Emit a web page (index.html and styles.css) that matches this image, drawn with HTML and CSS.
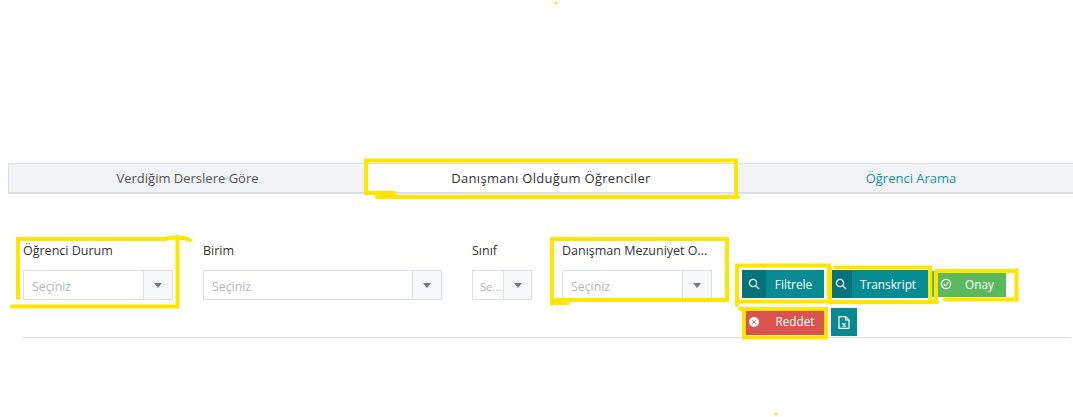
FILE: index.html
```html
<!DOCTYPE html>
<html lang="en">
<head>
    <meta charset="UTF-8" />
    <title>Danışmanı Olduğum Öğrenciler</title>
    <link rel="stylesheet" href="styles.css">
</head>
<body>
<div class="tabs">
    <div class="tab">Verdiğim Derslere Göre</div>
    <div class="tab active">Danışmanı Olduğum Öğrenciler</div>
    <div class="tab link">Öğrenci Arama</div>
</div>

<div class="filters">
    <div class="field">
        <label>Öğrenci Durum</label>
        <div class="select"><span class="value">Seçiniz</span><span class="arrow"></span></div>
    </div>
    <div class="field">
        <label>Birim</label>
        <div class="select"><span class="value">Seçiniz</span><span class="arrow"></span></div>
    </div>
    <div class="field narrow">
        <label>Sınıf</label>
        <div class="select"><span class="value">Seçiniz</span><span class="arrow"></span></div>
    </div>
    <div class="field">
        <label>Danışman Mezuniyet Onayı</label>
        <div class="select"><span class="value">Seçiniz</span><span class="arrow"></span></div>
    </div>
    <div class="actions">
        <button class="btn teal filtrele">
            <span class="btn-icon">
                <svg width="12" height="12" viewBox="0 0 12 12"><circle cx="5" cy="5" r="3.6" /><path d="M7.7 7.7L11 11" /></svg>
            </span>
            <span class="btn-text">Filtrele</span>
        </button>
        <button class="btn teal transkript">
            <span class="btn-icon">
                <svg width="12" height="12" viewBox="0 0 12 12"><circle cx="5" cy="5" r="3.6" /><path d="M7.7 7.7L11 11" /></svg>
            </span>
            <span class="btn-text">Transkript</span>
        </button>
        <button class="btn green onay">
            <span class="btn-icon">
                <svg width="12" height="12" viewBox="0 0 12 12"><circle cx="6" cy="6" r="4.6" /><path d="M3.8 6.2L5.4 7.7L8.4 4.4" /></svg>
            </span>
            <span class="btn-text">Onay</span>
        </button>
        <button class="btn red reddet">
            <span class="btn-icon">
                <svg width="12" height="12" viewBox="0 0 12 12"><circle class="solid" cx="6" cy="6" r="5" /><path class="cross" d="M4.3 4.3L7.7 7.7M7.7 4.3L4.3 7.7" /></svg>
            </span>
            <span class="btn-text">Reddet</span>
        </button>
        <button class="btn teal excel">
            <svg width="12" height="13" viewBox="0 0 12 13"><path d="M1 .6H7.600L11 4V12.400H1Z" /><path d="M7.600 .6V4H11" /><text x="6" y="10.500">x</text></svg>
        </button>
    </div>
</div>
<div class="rule"></div>

<!-- yellow marker scribbles drawn on top of the screenshot -->
<svg class="marks" width="1073" height="417" viewBox="0 0 1073 417">
    <path d="M366 160.500H736V196" />
    <path d="M366 160.500V193H395" />
    <path d="M377 197H738" />
    <path d="M18 298V239H165C172 237 180 236 190 240" />
    <path d="M177.500 237V306.500H12" />
    <path d="M552 304V239H727V300H552" />
    <path d="M552 303H568" />
    <path d="M737 305V265.500H829V298" />
    <path d="M740 301.500H830" />
    <path d="M830 268V300" />
    <path d="M835 267.500H930V301" />
    <path d="M830 302H937" />
    <path d="M937 271H1014" />
    <path d="M936 271V299" />
    <path d="M1016.500 270V299.500H945" />
    <path d="M740 309H826V337.500H744V309" />
    <circle cx="556" cy="3" r="1.500" />
    <circle cx="776" cy="414" r="1.500" />
</svg>
</body>
</html>
```

FILE: styles.css
```css
html, body {
    height: 417px;
    overflow: hidden;
}
body {
    font-family: "Open Sans", sans-serif;
    font-size: 13px;
    background: #fff;
    margin: 0;
    padding: 163px 0 0 8px;
    box-sizing: border-box;
    color: #333;
    position: relative;
}
.tabs {
    display: grid;
    grid-template-columns: 358px 370px 350px;
    width: 1078px;
    height: 31px;
}
.tab {
    background: #f1f3f7;
    border-top: 1px solid #dcdfe6;
    border-bottom: 2px solid #dcdfe6;
    text-align: center;
    line-height: 28px;
    color: #555;
}
.tab:first-child { border-left: 1px solid #dcdfe6; }
.tab.active { background: #fff; color: #333; letter-spacing: 0.3px; }
.tab.link { color: #1a929b; }

.filters {
    display: grid;
    grid-template-columns: 180px 269px 90px 180px 346px;
    margin-top: 48px;
    height: 95px;
}
.field {
    padding: 0 15px;
    min-width: 0;
}
.field label {
    display: block;
    height: 28px;
    font-size: 12.500px;
    line-height: 18px;
    white-space: nowrap;
    overflow: hidden;
    text-overflow: ellipsis;
    color: #333;
}
.select {
    display: flex;
    height: 30px;
    box-sizing: border-box;
    border: 1px solid #dcdfe6;
    background: #fff;
}
.select .value {
    flex: 1;
    min-width: 0;
    padding-left: 8px;
    font-size: 12.300px;
    line-height: 31px;
    color: #b4b7bd;
    white-space: nowrap;
    overflow: hidden;
    text-overflow: ellipsis;
}
.narrow .select .value { padding-left: 7px; font-size: 11.500px; letter-spacing: -0.3px; }
.narrow .select .arrow { width: 27px; }
.select .arrow {
    width: 28px;
    flex: none;
    background: #f7f8fa;
    border-left: 1px solid #dcdfe6;
    position: relative;
}
.select .arrow::after {
    content: "";
    position: absolute;
    left: 10px;
    top: 12px;
    border-left: 4px solid transparent;
    border-right: 4px solid transparent;
    border-top: 5px solid #777;
}

.actions {
    display: flex;
    flex-wrap: wrap;
    align-content: flex-start;
    column-gap: 7px;
    row-gap: 10px;
    padding-top: 28px;
    padding-left: 15px;
    width: 290px;
}
.btn {
    display: flex;
    align-items: stretch;
    height: 28px;
    padding: 0;
    border: 0;
    color: #fff;
    font: inherit;
    font-size: 11.800px;
}
.btn svg {
    fill: none;
    stroke: currentColor;
    stroke-width: 1.2;
}
.btn-icon {
    width: 24px;
    flex: none;
    display: flex;
    align-items: center;
    justify-content: center;
}
.btn-text {
    flex: 1;
    text-align: center;
    line-height: 28px;
}
.teal { background: #078b92; }
.teal .btn-icon { background: #06737a; }
.green { background: #5cb85c; }
.red { background: #d9534f; }
.filtrele { width: 82px; }
.filtrele .btn-text { padding-right: 3px; }
.transkript { width: 98px; margin-left: -1px; }
.transkript .btn-icon { width: 22px; }
.transkript .btn-text { padding-right: 4px; }
.onay { width: 74px; margin-left: -3px; margin-top: 1px; height: 26px; }
.onay .btn-icon { padding-left: 2px; }
.onay .btn-text { line-height: 26px; padding-right: 5px; }
.reddet { width: 82px; height: 27px; }
.reddet .btn-text { line-height: 27px; }
.reddet .solid { fill: #fff; stroke: none; }
.reddet .cross { stroke: #d9534f; stroke-width: 1; }
.excel {
    width: 26px;
    align-items: center;
    justify-content: center;
}
.excel text {
    font-family: "Liberation Serif", serif;
    font-size: 9px;
    font-weight: bold;
    text-anchor: middle;
    fill: #fff;
    stroke: none;
}

.rule {
    width: 1048px;
    margin-left: 15px;
    border-top: 1px solid #dcdfe6;
}

.marks {
    position: absolute;
    left: 0;
    top: 0;
}
.marks path {
    fill: none;
    stroke: #ffe600;
    stroke-width: 4;
    stroke-linecap: round;
}
.marks circle { fill: #ffe600; }
```
